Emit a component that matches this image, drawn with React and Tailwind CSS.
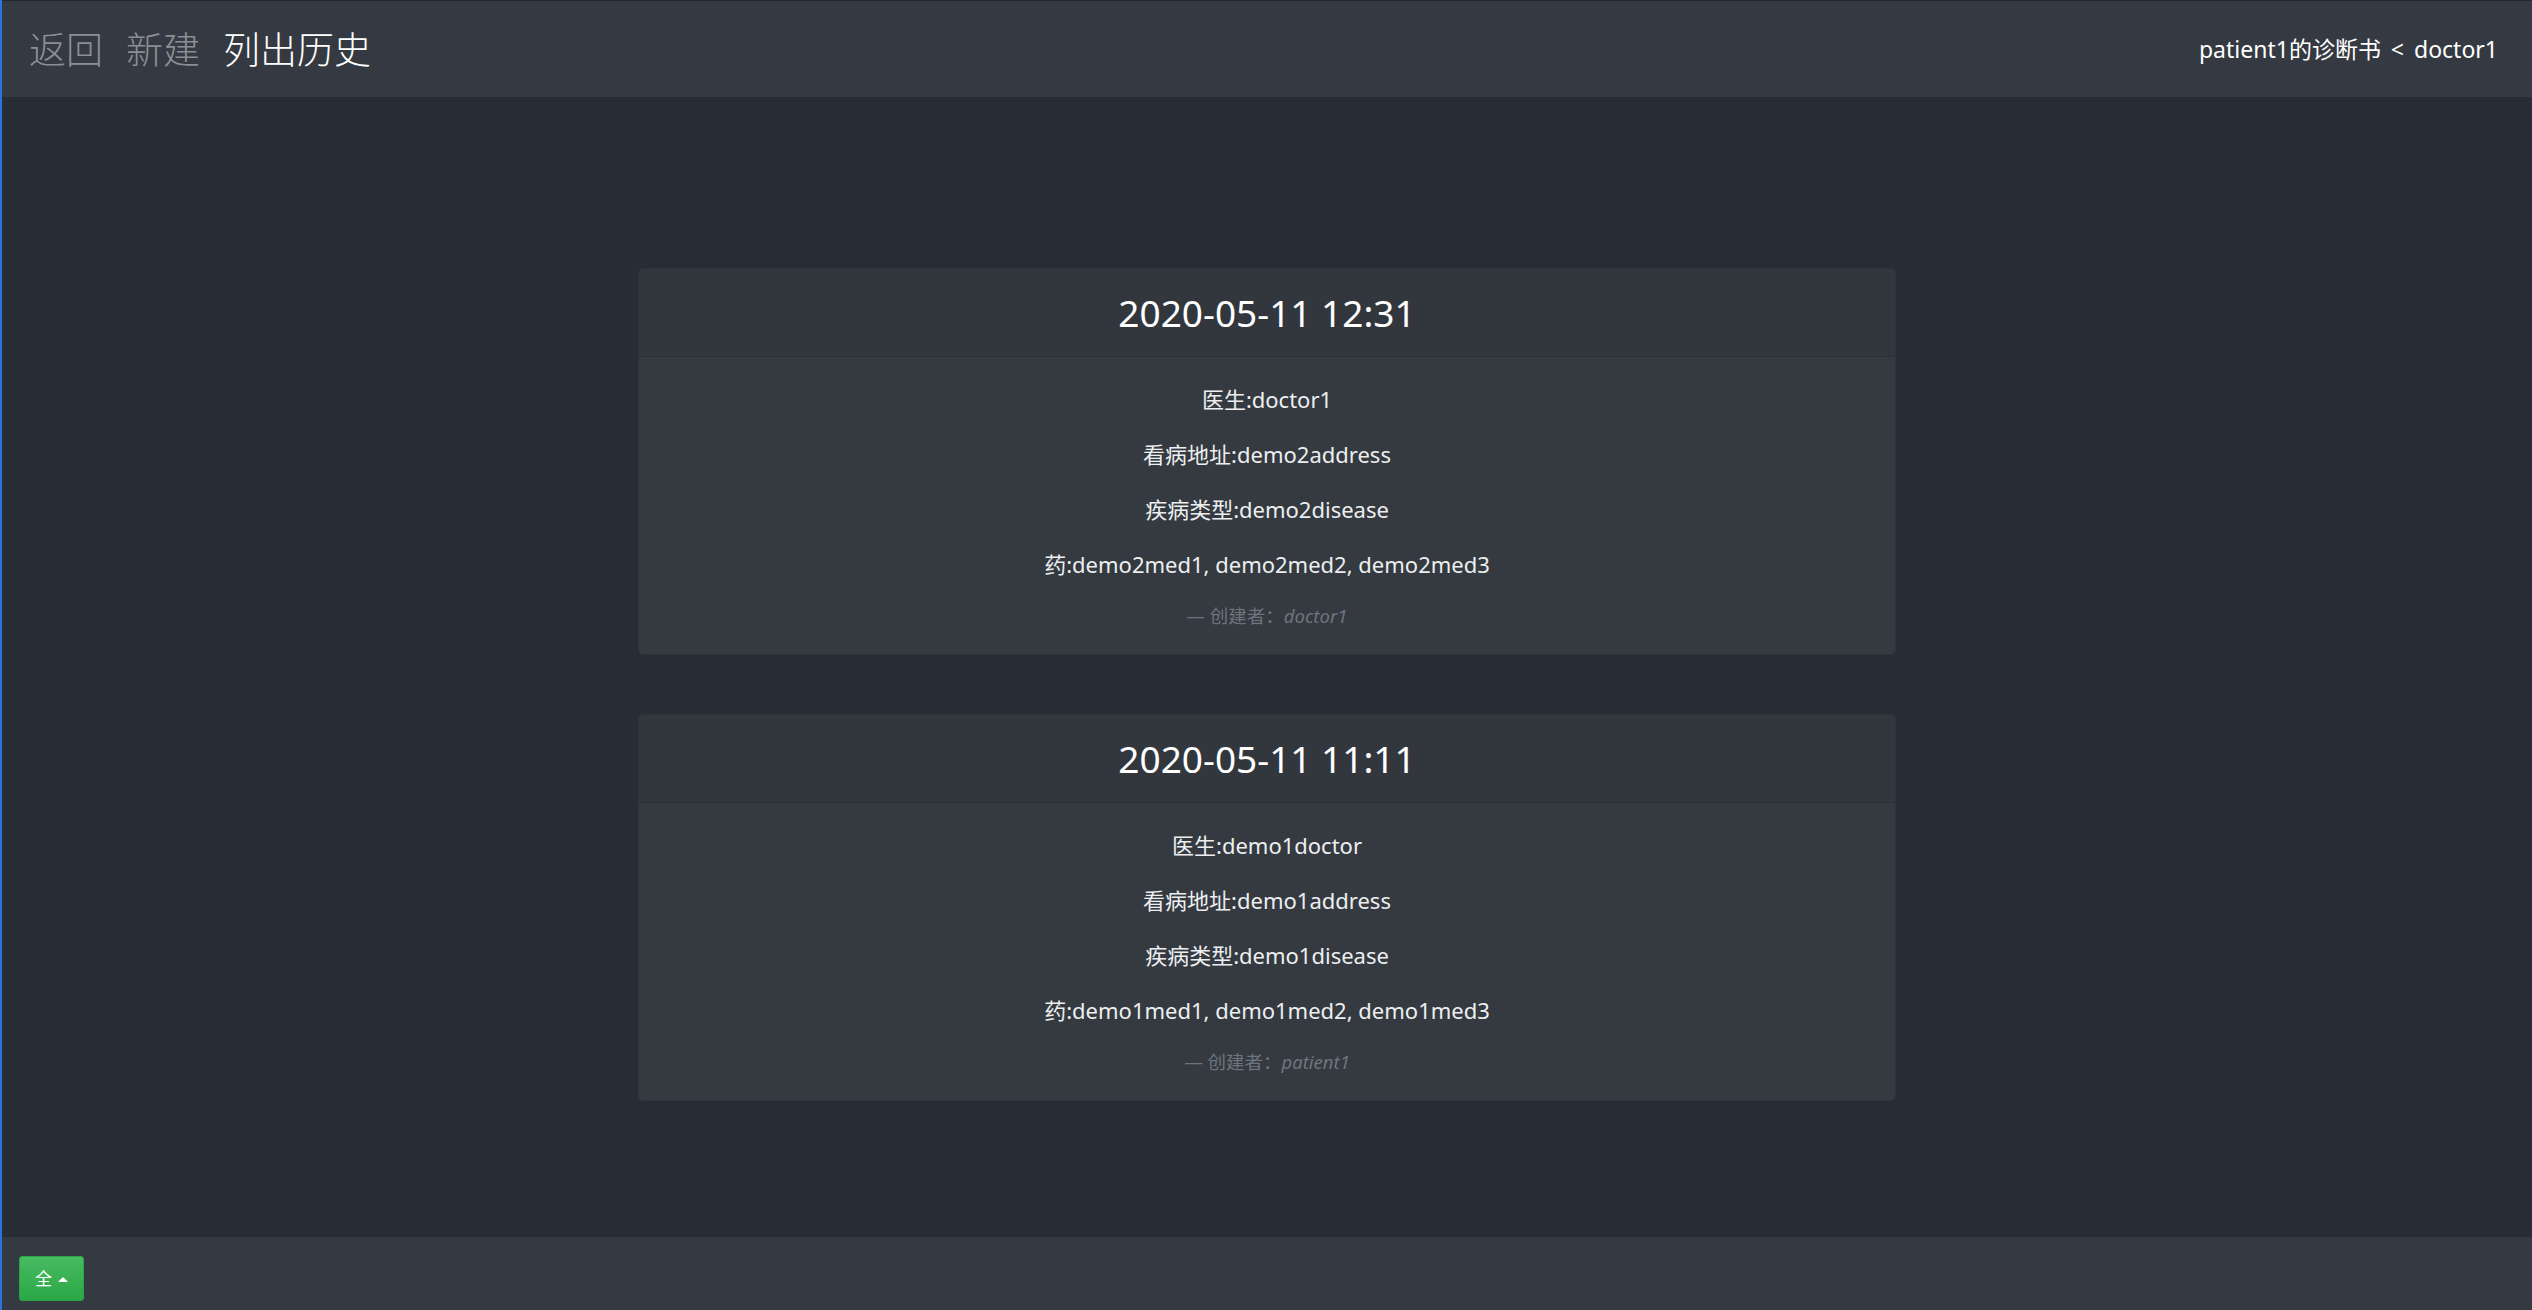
import React from "react";

const records = [
  {
    time: "2020-05-11 12:31",
    doctor: "doctor1",
    address: "demo2address",
    disease: "demo2disease",
    meds: "demo2med1, demo2med2, demo2med3",
    creator: "doctor1",
  },
  {
    time: "2020-05-11 11:11",
    doctor: "demo1doctor",
    address: "demo1address",
    disease: "demo1disease",
    meds: "demo1med1, demo1med2, demo1med3",
    creator: "patient1",
  },
];

function RecordCard({ r }) {
  return (
    <div className="w-[1258px] bg-[#343a40] border border-[#2f343a] rounded-[5px] overflow-hidden">
      {/* HEADER */}
      <div className="h-[88px] flex items-center justify-center bg-[#32373e] border-b border-[#2b2f35]">
        <h3 className="text-[37px] leading-none text-white font-normal">{r.time}</h3>
      </div>

      {/* BODY */}
      <div className="px-[27px] pt-[26px] pb-[25px] text-center text-[22px] leading-[33px] text-[#eceef0]">
        <p className="mb-[22px]">医生:{r.doctor}</p>
        <p className="mb-[22px]">看病地址:{r.address}</p>
        <p className="mb-[22px]">疾病类型:{r.disease}</p>
        <p className="mb-[22px]">药:{r.meds}</p>
        <p className="text-[18.5px] leading-[26px] text-[#6c757d]">
          — 创建者：<i>{r.creator}</i>
        </p>
      </div>
    </div>
  );
}

export default function App() {
  return (
    <div className="w-[2532px] h-[1310px] flex flex-col bg-[#282c34] border-l-2 border-[#2b74dc] font-['Noto_Sans','Noto_Sans_CJK_SC',sans-serif] overflow-hidden">
      {/* TOP NAV */}
      <header className="h-[97px] shrink-0 flex items-center justify-between bg-[#353a42] border-t border-[#24272c] pl-[27px] pr-[34px]">
        <nav className="flex items-center gap-[23px] text-[37px] font-light font-['Noto_Sans_CJK_SC',sans-serif]">
          <a className="text-[#8b8f95]">返回</a>
          <a className="text-[#8b8f95]">新建</a>
          <a className="text-white">列出历史</a>
        </nav>
        <div className="text-[23px] text-white">
          patient1的诊断书<span className="mx-[4px]"> &lt; </span>doctor1
        </div>
      </header>

      {/* LIST */}
      <main className="flex-1 flex flex-col items-center gap-[59px] pt-[171px]">
        {records.map((r) => (
          <RecordCard key={r.time} r={r} />
        ))}
      </main>

      {/* BOTTOM BAR */}
      <footer className="h-[73px] shrink-0 flex items-start bg-[#353a42] pl-[17px] pt-[19px]">
        <button className="w-[65px] h-[45px] rounded-[3px] bg-gradient-to-b from-[#48bb63] to-[#28a745] border border-[#28a745] text-white text-[17px] flex items-center justify-center gap-[6px]">
          <span>全</span>
          <svg width="10" height="6" viewBox="0 0 10 6">
            <path d="M0 6 L5 1 L10 6 Z" fill="white" />
          </svg>
        </button>
      </footer>
    </div>
  );
}
